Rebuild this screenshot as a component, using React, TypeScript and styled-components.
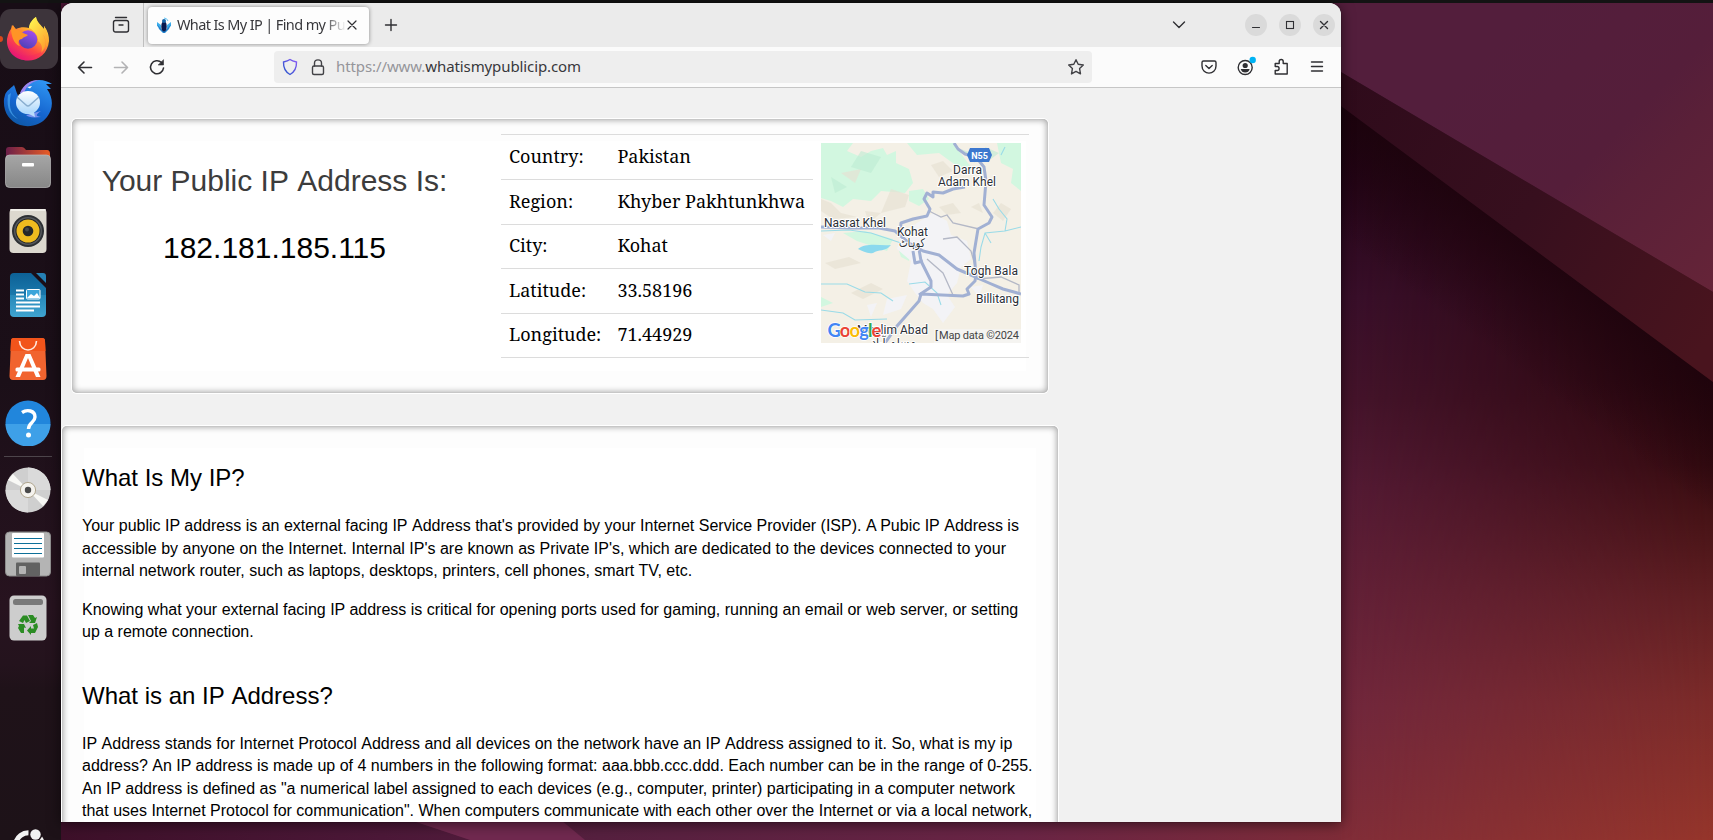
import React from 'react';
import styled, { createGlobalStyle } from 'styled-components';

const Global = createGlobalStyle`
  * { box-sizing: border-box; }
  body { margin: 0; overflow: hidden; background: #2c0e22; font-family: "Liberation Sans", Arial, sans-serif; }
  svg { display: block; flex: none; }
`;

const Desktop = styled.div`
  position: relative;
  width: 1713px;
  height: 840px;
  overflow: hidden;
  display: flex;
  flex-direction: column;
`;
const Backdrop = styled.div`
  position: absolute;
  inset: 0;
`;
const TopBar = styled.div`
  position: relative;
  height: 3px;
  flex: none;
  background: #131313;
`;
const Workspace = styled.div`
  position: relative;
  display: flex;
  align-items: flex-start;
  height: 837px;
`;
const Dock = styled.nav`
  width: 61px;
  height: 837px;
  flex: none;
  padding-top: 4px;
  overflow: hidden;
  display: flex;
  flex-direction: column;
  background: linear-gradient(180deg, #180d16 0%, #1b0f18 45%, #27131f 72%, #24131d 79%, #1f1219 82%, #1d1218 100%);
`;
const DockItem = styled.div<{ $active?: boolean }>`
  position: relative;
  width: 58px;
  height: 60px;
  margin: 2px 0;
  flex: none;
  display: flex;
  align-items: center;
  justify-content: center;
  padding-right: 2px;
  border-radius: 11px;
  background: ${(p) => (p.$active ? '#3d343b' : 'transparent')};
`;
const RunningDot = styled.span`
  position: absolute;
  left: -3px;
  top: 27px;
  width: 6px;
  height: 6px;
  border-radius: 50%;
  background: #d8481c;
`;
const DockRule = styled.div`
  width: 48px;
  height: 1px;
  margin: 1px 0 1px 4px;
  flex: none;
  background: #4d454b;
`;
const LauncherSlot = styled.div`
  padding: 179px 0 0 13px;
`;

const Window = styled.section`
  width: 1280px;
  height: 819px;
  flex: none;
  display: flex;
  flex-direction: column;
  overflow: hidden;
  border-radius: 12px 12px 0 0;
  background: #f1f1f1;
  box-shadow: 0 2px 14px rgba(0, 0, 0, 0.55), 0 0 1px #000;
`;
const TitleBar = styled.header`
  height: 44px;
  flex: none;
  display: flex;
  align-items: center;
  background: #ebebeb;
`;
const RecentSlot = styled.div`
  width: 83px;
  height: 44px;
  display: flex;
  align-items: center;
  padding-left: 51px;
  border-right: 1px solid #bfbfbf;
`;
const Tab = styled.div`
  width: 221px;
  height: 37px;
  margin: 0 0 0 4px;
  padding: 0 9px 0 9px;
  display: flex;
  align-items: center;
  border-radius: 4px;
  background: #fdfdfd;
  box-shadow: 0 0 4px rgba(0, 0, 0, 0.42);
`;
const TabTitle = styled.span`
  width: 169px;
  margin: -2px 0 0 6px;
  overflow: hidden;
  white-space: nowrap;
  font: 14.5px/20px "Noto Sans", sans-serif;
  letter-spacing: -0.62px;
  color: #38383c;
  mask-image: linear-gradient(90deg, #000 87%, transparent 100%);
`;
const NewTab = styled.div`
  margin-left: 15px;
`;
const WindowButtons = styled.div`
  margin-left: auto;
  padding-right: 6px;
  display: flex;
  align-items: center;
  gap: 12px;
`;
const TabsMenu = styled.div`
  margin-right: 47px;
`;
const RoundButton = styled.span`
  width: 22px;
  height: 22px;
  border-radius: 50%;
  background: #dadada;
  display: flex;
  align-items: center;
  justify-content: center;
`;
const Toolbar = styled.div`
  height: 41px;
  flex: none;
  display: flex;
  align-items: center;
  padding: 0 15px 0 15px;
  border-bottom: 1px solid #c6c6c6;
  background: #fbfbfb;
`;
const NavButtons = styled.div`
  display: flex;
  gap: 18px;
`;
const AddressBar = styled.div`
  width: 818px;
  height: 32px;
  margin-left: 108px;
  padding: 0 7px 0 7px;
  display: flex;
  align-items: center;
  border-radius: 4px;
  background: #eeeeee;
`;
const IdentityIcons = styled.div`
  display: flex;
  gap: 10px;
`;
const Url = styled.span`
  flex: 1;
  margin: -2px 0 0 9px;
  font: 15px/20px "Noto Sans", sans-serif;
  letter-spacing: -0.1px;
  color: #38383c;
  span { color: #95959a; }
`;
const ToolButtons = styled.div`
  margin-left: auto;
  display: flex;
  gap: 18px;
`;

const Page = styled.main`
  flex: 1;
  min-height: 0;
  overflow: hidden;
`;
const panel = `
  border-radius: 5px;
  background: #fff;
  box-shadow: 0 0 0 1px #fff, inset 0 0 6px 1px rgba(0, 0, 0, 0.36), inset 0 0 1px rgba(0, 0, 0, 0.2), inset 0 0 0 22px #fdfdfd;
`;
const IpPanel = styled.section`
  ${panel}
  width: 976px;
  height: 274px;
  margin: 31px 0 0 11px;
  padding: 15px 18px 0 23px;
  display: flex;
`;
const IpSummary = styled.div`
  width: 406px;
  padding-right: 47px;
  text-align: center;
  white-space: nowrap;
`;
const IpHeading = styled.h1`
  margin: 29px 0 0;
  font-size: 30px;
  line-height: 36px;
  font-weight: 400;
  color: #3c3c3c;
`;
const IpValue = styled.div`
  margin-top: 31px;
  font-size: 30px;
  line-height: 36px;
  color: #000;
`;
const Details = styled.div`
  display: flex;
  width: 528px;
  height: 224px;
  border-top: 1px solid #dcdcdc;
  border-bottom: 1px solid #dcdcdc;
`;
const DetailRows = styled.div`
  width: 312px;
`;
const DetailRow = styled.div<{ $height: number }>`
  display: flex;
  align-items: center;
  height: ${(p) => p.$height}px;
  padding: 0 0 ${(p) => (p.$height < 45 ? 4 : 2)}px 8px;
  border-bottom: 1px solid #dcdcdc;
  font: 18px/24px "Noto Serif", "DejaVu Serif Condensed", "DejaVu Serif", serif;
  white-space: nowrap;
  color: #000;
  &:last-child { border-bottom: 0; }
`;
const DetailLabel = styled.span`
  width: 108.4px;
`;
const MapFrame = styled.div`
  margin: 8px;
`;
const ArticlePanel = styled.article`
  ${panel}
  width: 996px;
  height: 440px;
  margin: 33px 0 0 1px;
  padding: 35px 0 0 20px;
`;
const ArticleHeading = styled.h2<{ $gap?: number }>`
  margin: ${(p) => p.$gap ?? 0}px 0 20.7px;
  font-size: 24px;
  line-height: 33.6px;
  font-weight: 400;
  color: #000;
`;
const Paragraph = styled.p`
  margin: 0 0 16px;
  font-size: 16px;
  line-height: 22.4px;
  white-space: nowrap;
  color: #000;
`;
const PlainSpace = styled.span`
  font-kerning: none;
`;

/* Keeps the space before a capital A at its full width, without kerning. */
const Words = ({ children }: { children: string }) => (
  <>
    {children.split(/ (?=A)/).map((part, i) => (
      <React.Fragment key={i}>
        {i > 0 && <PlainSpace> </PlainSpace>}
        {part}
      </React.Fragment>
    ))}
  </>
);

const Wallpaper = () => (
  <svg width="1713" height="840" viewBox="0 0 1713 840">
    <defs>
      <linearGradient id="upper" gradientUnits="userSpaceOnUse" x1="1480" y1="60" x2="1713" y2="290">
        <stop offset="0" stopColor="#531e3c" />
        <stop offset=".45" stopColor="#551e3a" />
        <stop offset=".6" stopColor="#5a2038" />
        <stop offset="1" stopColor="#652438" />
      </linearGradient>
      <linearGradient id="band" gradientUnits="userSpaceOnUse" x1="1341" y1="90" x2="1713" y2="330">
        <stop offset="0" stopColor="#2f0b1b" />
        <stop offset=".5" stopColor="#370f1e" />
        <stop offset="1" stopColor="#49141e" />
      </linearGradient>
      <linearGradient id="left" gradientUnits="userSpaceOnUse" x1="0" y1="106" x2="0" y2="840">
        <stop offset="0" stopColor="#19030f" />
        <stop offset=".1" stopColor="#26061a" />
        <stop offset=".26" stopColor="#390f2a" />
        <stop offset=".4" stopColor="#45142b" />
        <stop offset=".52" stopColor="#541a34" />
        <stop offset=".66" stopColor="#622037" />
        <stop offset=".82" stopColor="#71273c" />
        <stop offset="1" stopColor="#802d38" />
      </linearGradient>
      <linearGradient id="right" gradientUnits="userSpaceOnUse" x1="0" y1="382" x2="0" y2="840">
        <stop offset="0" stopColor="#29060c" />
        <stop offset=".18" stopColor="#360b10" />
        <stop offset=".3" stopColor="#471316" />
        <stop offset=".48" stopColor="#611f22" />
        <stop offset=".7" stopColor="#7c2b29" />
        <stop offset="1" stopColor="#95352b" />
      </linearGradient>
      <linearGradient id="fade" x1="0" x2="1" y1="0" y2="0">
        <stop offset="0" stopColor="#000" />
        <stop offset="1" stopColor="#fff" />
      </linearGradient>
      <mask id="rightMask" maskUnits="userSpaceOnUse" x="1341" y="0" width="372" height="840">
        <rect x="1341" width="372" height="840" fill="url(#fade)" />
      </mask>
      <linearGradient id="crease" gradientUnits="userSpaceOnUse" x1="1527" y1="244" x2="1463" y2="330">
        <stop offset="0" stopColor="#1c030c" stopOpacity=".75" />
        <stop offset="1" stopColor="#1c030c" stopOpacity="0" />
      </linearGradient>
      <linearGradient id="floor" x1="0" x2="1" y1="0" y2="0">
        <stop offset="0" stopColor="#3d1029" />
        <stop offset=".25" stopColor="#4c1838" />
        <stop offset=".42" stopColor="#56203f" />
        <stop offset=".75" stopColor="#6a2545" />
        <stop offset="1" stopColor="#7e2c38" />
      </linearGradient>
    </defs>
    <rect width="1713" height="840" fill="#4a1534" />
    <rect x="1300" width="413" height="840" fill="url(#left)" />
    <rect x="1341" width="372" height="840" fill="url(#right)" mask="url(#rightMask)" />
    <path d="M1341 106L1713 382V530L1341 254Z" fill="url(#crease)" />
    <path d="M1300 45V76L1341 106L1713 382V292L1341 72Z" fill="url(#band)" />
    <path d="M1300 0H1713V292L1341 72L1300 48Z" fill="url(#upper)" />
    <rect x="61" y="815" width="1280" height="25" fill="url(#floor)" />
    <path d="M395 815L470 840H585L555 815Z" fill="#70294f" />
  </svg>
);

const FirefoxIcon = () => (
  <svg width="44" height="44" viewBox="0 0 44 44">
    <defs>
      <linearGradient id="ffA" x1=".85" y1=".1" x2=".3" y2="1">
        <stop offset="0" stopColor="#fff04a" />
        <stop offset=".35" stopColor="#ffa52e" />
        <stop offset=".65" stopColor="#ff4a45" />
        <stop offset="1" stopColor="#e2127b" />
      </linearGradient>
      <linearGradient id="ffB" x1=".8" y1="0" x2=".3" y2="1">
        <stop offset="0" stopColor="#a84df0" />
        <stop offset="1" stopColor="#4a41b5" />
      </linearGradient>
      <linearGradient id="ffC" x1=".2" y1="0" x2=".8" y2="1">
        <stop offset="0" stopColor="#fff44f" />
        <stop offset="1" stopColor="#ff9a2b" />
      </linearGradient>
    </defs>
    <path d="M2 18C3 15 4 13 5 12L6 8L10 12C14 10 19 10 23 11C24 6 27 2 30 0C31 5 35 8 38 12L38 9C42 14 43 19 43 24C42 36 33 43.500 22 43.500C10 43.500 0 35 1 22Z" fill="url(#ffA)" />
    <path d="M23 11C23 6 27 2 30 0C30 6 36 9 38 13L38 9C45 20 42 31 35 36C37 31 36 27 32 24C33 20 28 13 23 11Z" fill="url(#ffC)" />
    <circle cx="22" cy="22.500" r="9.300" fill="url(#ffB)" />
    <path d="M5 13L7 8L10 13C13 12 15 15 17 16L22 18C20 20 17 20 16 22C13 22 11 25 14 29C9 28 6 22 5 13Z" fill="#ff9426" />
    <path d="M3 30C10 41 27 41 36 34C43 28 38 20 37 17C44 29 38 43 22 43.500C13 43.500 6 38 3 30Z" fill="#f31b69" opacity=".25" />
  </svg>
);

const ThunderbirdIcon = () => (
  <svg width="50" height="48" viewBox="0 0 50 48">
    <defs>
      <linearGradient id="tbA" x1=".8" y1="0" x2=".3" y2="1">
        <stop offset="0" stopColor="#2f95f2" />
        <stop offset=".6" stopColor="#1565cf" />
        <stop offset="1" stopColor="#0e58a6" />
      </linearGradient>
      <linearGradient id="tbB" x1="0" y1="0" x2="0" y2="1">
        <stop offset="0" stopColor="#fff" />
        <stop offset="1" stopColor="#a9d6fb" />
      </linearGradient>
    </defs>
    <path d="M2 16C3 12 8 9 11 6C13 10 13 14 16 18C19 8 26 1 36 1C41 1 46 3 49 5L43 5L48 10L44 10C51 20 50 30 44 38C38 46 27 49 17 46C6 42 0 33 1 20Z" fill="url(#tbA)" />
    <path d="M17 14C21 5 27 1 36 1C28 3 22 8 21 15Z" fill="#9c83ec" />
    <path d="M5 16C3 30 8 37 15 40C6 34 6 25 8 14Z" fill="#51b2fa" opacity=".6" />
    <path d="M23 36L38 32C34 35 31 37 38 38C29 39 25 38 23 36Z" fill="#7792ee" />
    <ellipse cx="25" cy="23.500" rx="12" ry="11.500" fill="url(#tbB)" />
    <path d="M14 18L23 26Q25 28 27 26L36 18" fill="none" stroke="#89aed0" strokeWidth="1.500" />
    <path d="M24 34L32 38L31 33Z" fill="#b9ddfb" />
    <path d="M24 8L29 7L27 9.500Z" fill="#fff" />
  </svg>
);

const FilesIcon = () => (
  <svg width="46" height="42" viewBox="0 0 46 42">
    <defs>
      <linearGradient id="fiA" x1="0" x2="1" y1="0" y2="0">
        <stop offset="0" stopColor="#6b1f49" />
        <stop offset="1" stopColor="#e95c25" />
      </linearGradient>
      <linearGradient id="fiB" x1="0" x2="0" y1="0" y2="1">
        <stop offset="0" stopColor="#a6a6a6" />
        <stop offset="1" stopColor="#878787" />
      </linearGradient>
    </defs>
    <path d="M1 4Q1 1 4 1H17Q19 1 21 4H42Q45 4 45 8V20H1Z" fill="url(#fiA)" />
    <rect x=".5" y="9" width="45" height="32.500" rx="4" fill="url(#fiB)" stroke="#bdbdbd" strokeWidth=".7" />
    <rect x="17" y="17" width="12" height="3.500" rx="1" fill="#fff" />
  </svg>
);

const MusicIcon = () => (
  <svg width="38" height="46" viewBox="0 0 38 46">
    <rect x=".5" y="1" width="37" height="44" rx="4" fill="#dcd8cf" />
    <rect x="1" y="1" width="36" height="2" rx="1" fill="#f0eee8" />
    <circle cx="19" cy="23" r="16" fill="#2d3034" />
    <circle cx="19" cy="23" r="14" fill="#55585c" />
    <circle cx="19" cy="23" r="12.500" fill="#212326" />
    <circle cx="19" cy="23" r="11.500" fill="#efbb1f" />
    <circle cx="19" cy="23" r="5.300" fill="#26282a" />
    <circle cx="18" cy="21.500" r="2" fill="#46494c" />
  </svg>
);

const WriterIcon = () => (
  <svg width="38" height="46" viewBox="0 0 38 46">
    <defs>
      <linearGradient id="wrA" x1="0" x2="0" y1="0" y2="1">
        <stop offset="0" stopColor="#0d6196" />
        <stop offset=".5" stopColor="#1a78ac" />
        <stop offset=".51" stopColor="#2688b9" />
        <stop offset="1" stopColor="#3fa4d0" />
      </linearGradient>
    </defs>
    <path d="M5 1H22L37 16V41Q37 45 33 45H5Q1 45 1 41V5Q1 1 5 1Z" fill="url(#wrA)" />
    <path d="M27 1H34Q37 1 37 4V11Z" fill="#2581b5" />
    <path d="M7 18.500H15M7 22.500H15M7 26.500H15M7 30.500H31M7 34.500H31M7 38.500H25" stroke="#fff" strokeWidth="2" />
    <rect x="17.500" y="17.500" width="13.500" height="9.500" rx="1" fill="#3ca5da" stroke="#fff" />
    <path d="M18 26L22 22L25 24L28 21L31 26Z" fill="#fff" />
  </svg>
);

const StoreIcon = () => (
  <svg width="38" height="44" viewBox="0 0 38 44">
    <path d="M5 1H33Q36 1 36 4L37.500 39Q37.500 43 34 43H4Q.5 43 .5 39L2 4Q2 1 5 1Z" fill="#f1642f" />
    <path d="M5 1H33Q36 1 36 4L36.500 14H1.500L2 4Q2 1 5 1Z" fill="#f2541b" />
    <path d="M10.500 4C11 16 27 16 27.500 4" fill="none" stroke="#ffe9df" strokeWidth="1.600" />
    <path d="M16.500 17H21.500L31.500 40H27L19 21L11 40H6.500Z" fill="#fff" />
    <rect x="6.500" y="30.500" width="25" height="4" rx="1.500" fill="#fff" />
  </svg>
);

const HelpIcon = () => (
  <svg width="46" height="46" viewBox="0 0 46 46">
    <circle cx="23" cy="23" r="22.500" fill="#2186dc" />
    <path d="M.5 24H45.500A22.500 22.500 0 0 1 .5 24Z" fill="#3ea0e8" />
    <path d="M17 12.500C22 9 30 10.500 30 17C30 22.500 23.500 22.500 23.500 29" fill="none" stroke="#fff" strokeWidth="3.400" />
    <circle cx="23.500" cy="35" r="2.500" fill="#fff" />
  </svg>
);

const DiscIcon = () => (
  <svg width="46" height="46" viewBox="0 0 46 46">
    <circle cx="23" cy="23" r="22.500" fill="#cfcfcf" />
    <path d="M23 23V.5A22.500 22.500 0 0 1 45.500 23Z" fill="#dadada" />
    <path d="M23 23V45.500A22.500 22.500 0 0 1 .5 23Z" fill="#dadada" />
    <path d="M23 23L3 13L8 7ZM23 23L43 33L38 39Z" fill="#f8f8f5" />
    <circle cx="23" cy="23" r="7.600" fill="#f5f3ee" stroke="#b1a78f" />
    <circle cx="23" cy="23" r="3.200" fill="#4a4a4a" />
  </svg>
);

const FloppyIcon = () => (
  <svg width="46" height="46" viewBox="0 0 46 46">
    <rect x=".5" y="1" width="45" height="44" rx="4" fill="#b4b4b4" stroke="#8c8c8c" />
    <rect x="7" y="2" width="32" height="24.500" rx="1" fill="#fff" />
    <path d="M9 7.500H37M9 12.500H37M9 17.500H37M9 22.500H37" stroke="#0e7099" />
    <rect x="11" y="31.500" width="24" height="13.500" rx="1" fill="#626262" />
    <rect x="14" y="35" width="7" height="8" rx="1" fill="#b4b4b4" />
  </svg>
);

const TrashIcon = () => (
  <svg width="38" height="46" viewBox="0 0 38 46">
    <rect x=".5" y=".5" width="37" height="45" rx="4.500" fill="#cdcdcd" />
    <rect x="4" y="4" width="30" height="6" rx="2.500" fill="#797979" />
    <g fill="#2b8c23">
      <path d="M14 20.500H18L21 26L17 28L15.500 25L14 28L10 26Z" />
      <path d="M19 20H24L26 23L28 22L26 28H20L22 26Z" />
      <path d="M24 30L28 28L29 32L26 38H22V40L18 35.500L22 31V33.500H25Z" />
      <path d="M9 29H15L17 33L15 32.500V38H12L9 33L10 31Z" />
    </g>
  </svg>
);

const UbuntuMark = () => (
  <svg width="32" height="32" viewBox="0 0 32 32">
    <path d="M2.800 13.500A13.500 13.500 0 0 1 15.500 3.800M27 9A13.500 13.500 0 0 1 29.500 17" fill="none" stroke="#f2f2f2" strokeWidth="5" />
    <circle cx="22.500" cy="5.500" r="6.700" fill="#1d1218" />
    <circle cx="22.500" cy="5.500" r="5.200" fill="#f2f2f2" />
  </svg>
);

const glyph = { fill: 'none', stroke: '#2f2f33', strokeWidth: 1.4, strokeLinecap: 'round' as const, strokeLinejoin: 'round' as const };

const RecentIcon = () => (
  <svg width="18" height="18" viewBox="0 0 18 18" {...glyph}>
    <path d="M3.500 1.500H14.500" /><rect x="1.500" y="4.500" width="15" height="11.500" rx="2" /><path d="M7 9H11" />
  </svg>
);
const FaviconIcon = () => (
  <svg width="14" height="16" viewBox="0 0 14 16">
    <path d="M0 5L4 8V12L0 9ZM14 5L10 8V12L14 9Z" fill="#3eb0ed" />
    <path d="M0 7L6 14H8L14 7L12 12L8 16H6L2 12Z" fill="#2083cf" />
    <ellipse cx="7" cy="9.500" rx="2.700" ry="5" fill="#07194f" />
    <circle cx="7" cy="4" r="2" fill="#1765a8" />
    <path d="M7 1Q10 1 11 4" fill="none" stroke="#63c6f5" />
  </svg>
);
const BackIcon = ({ dim }: { dim?: boolean }) => (
  <svg width="18" height="18" viewBox="0 0 18 18" {...glyph} stroke={dim ? '#b2b2b4' : '#2f2f33'} strokeWidth={1.6}>
    {dim ? <path d="M2.500 9.500H15.500M10 4L15.500 9.500L10 15" /> : <path d="M15.500 9.500H2.500M8 4L2.500 9.500L8 15" />}
  </svg>
);
const ReloadIcon = () => (
  <svg width="18" height="18" viewBox="0 0 18 18" {...glyph} strokeWidth={1.6}>
    <path d="M15.500 10A6.500 6.500 0 1 1 13.500 4.500" /><path d="M15.500 2V7H10.500Z" fill="#2f2f33" strokeWidth=".6" />
  </svg>
);
const ShieldIcon = () => (
  <svg width="18" height="18" viewBox="0 0 18 18">
    <defs>
      <linearGradient id="shield" x1="1" x2="0" y1="0" y2="1">
        <stop offset="0" stopColor="#8b5cf5" /><stop offset="1" stopColor="#2154c9" />
      </linearGradient>
    </defs>
    <path d="M9 1.500C11 3 13 3.500 15.500 4C15.700 10 13.500 14 9 16.500C4.500 14 2.300 10 2.500 4C5 3.500 7 3 9 1.500Z" fill="none" stroke="url(#shield)" strokeWidth="1.400" />
  </svg>
);
const LockIcon = () => (
  <svg width="18" height="18" viewBox="0 0 18 18" {...glyph} stroke="#424246">
    <rect x="3.500" y="8" width="11" height="8.500" rx="1.500" /><path d="M5.500 8V5C5.500 .8 12.500 .8 12.500 5V8" />
  </svg>
);
const StarIcon = () => (
  <svg width="18" height="18" viewBox="0 0 18 18" {...glyph} stroke="#424246">
    <path d="M9 1.700L11.200 6.300L16.300 7L12.600 10.600L13.500 15.900L9 13.400L4.500 15.900L5.400 10.600L1.700 7L6.800 6.300Z" />
  </svg>
);
const PocketIcon = () => (
  <svg width="18" height="18" viewBox="0 0 18 18" {...glyph}>
    <path d="M3.500 3H14.500Q16 3 16 4.500V8C16 17.500 2 17.500 2 8V4.500Q2 3 3.500 3ZM5.800 7.500L9 10.500L12.200 7.500" />
  </svg>
);
const AccountIcon = () => (
  <svg width="18" height="18" viewBox="-0.700 0 18 18" overflow="visible">
    <circle cx="8.500" cy="9.500" r="7" fill="none" stroke="#2f2f33" strokeWidth="1.400" />
    <circle cx="8.500" cy="7.500" r="2.600" fill="#2f2f33" />
    <path d="M4 11H13Q12 14.500 8.500 14.500T4 11Z" fill="#2f2f33" />
    <circle cx="16" cy="2" r="3.200" fill="#00b3f4" />
  </svg>
);
const ExtensionIcon = () => (
  <svg width="18" height="18" viewBox="-0.700 0 18 18" {...glyph}>
    <path d="M2.500 8V5.500H6.500V3.500C6.500 .9 10.500 .9 10.500 3.500V5.500H14.500V16H2.500V12.500H4.500C7 12.500 7 8.500 4.500 8.500H2.500" />
  </svg>
);
const MenuIcon = () => (
  <svg width="18" height="18" viewBox="0 0 18 18" {...glyph}><path d="M3.500 4H14.500M3.500 8.500H14.500M3.500 13H14.500" /></svg>
);

const label = {
  fontFamily: 'Roboto, sans-serif', fontSize: 12, fill: '#2b2f36',
  stroke: '#fff', strokeWidth: 2, paintOrder: 'stroke' as const, strokeLinejoin: 'round' as const,
};

const KohatMap = () => (
  <svg width="200" height="200" viewBox="0 0 200 200">
    <rect width="200" height="200" fill="#f4f0e6" />
    <path d="M0 0H32L26 8L40 14L50 8L62 5L66 12L75 8V20L88 26L92 40L84 50L60 48L50 58L32 56L22 64L10 58L0 55ZM86 0H132L150 24L140 26L118 10L96 12ZM176 0H200V48L190 40L192 26L180 20ZM88 48L102 46L108 56L98 63L88 58ZM22 90L44 88L72 96L66 108L36 98ZM78 108L90 106L88 118L80 114ZM0 154L12 160L0 164Z" fill="#d2f7e0" />
    <path d="M0 56L10 60L20 70L36 74L12 76L0 68ZM70 46L88 52L84 64L60 70ZM110 22L122 18L132 28L118 34ZM4 120L28 114L40 120L14 126ZM30 150L50 140L62 146L42 156ZM118 64L132 60L140 70L126 72ZM180 60L190 66L182 78L172 70ZM20 30L40 26L34 40ZM44 68L60 70L48 80ZM150 64L158 60L162 70Z" fill="#e6e1d3" opacity=".65" />
    <path d="M40 8L60 14L50 30L30 24ZM10 34L26 44L14 50ZM140 6L150 10L154 20ZM164 4L178 10L170 16Z" fill="#bdebd2" opacity=".6" />
    <path d="M112 70L126 78L130 92L146 98L150 116L140 124L136 140L126 152L134 164L122 180L112 166L102 160L94 150L86 138L90 118L76 106L80 90L96 80ZM66 156L86 152L80 166L62 172ZM46 162L56 160L50 174ZM150 144L162 142L158 154ZM2 92L14 90L10 98Z" fill="#f3f3f6" />
    <path d="M37 106C46 99 58 103 70 102C64 109 58 106 52 110C46 111 42 108 37 106Z" fill="#8bd9ee" />
    <g fill="none" stroke="#9adbe8" strokeWidth="1.100">
      <path d="M0 88L28 87L50 90L80 100M0 141L26 141L44 149L60 150L72 158M0 167L22 170L34 177L66 176M88 141L104 139L116 150L120 162M200 84L184 88L164 90L160 104L158 118M172 56L178 66L186 76L184 88M180 12L184 4M164 90L170 100" />
    </g>
    <g fill="none" stroke="#b4b8c6" strokeWidth="1.300">
      <path d="M108 68L120 74L126 72L132 80L158 86M122 96L136 94L150 108L156 130M106 116L122 130L132 152M156 136L180 134L198 142V150" />
    </g>
    <g fill="none" stroke="#a1b0d3" strokeWidth="3" strokeLinejoin="round">
      <path d="M0 84L30 85L58 85L74 88L88 100L102 108L118 112L136 126L150 132L168 140L182 146L200 151" />
      <path d="M79 90L80 80L92 76L106 73L109 66L103 56L106 50L112 54L112 49L122 50L132 46L144 44" />
      <path d="M133 0L137 6L144 11L155 14L163 24L165 38L163 62L171 74L168 80L157 86L153 110L155 132L154 138L146 146L148 151L142 153L100 151L98 158L76 183L64 200" />
      <path d="M98 106L100 118L110 138V144L98 152M92 108L94 120L102 118" />
    </g>
    <path d="M149 5H168L171 12L168 19H149L146 12Z" fill="#3d78cf" />
    <text x="158.500" y="15.500" textAnchor="middle" fontFamily="Roboto, sans-serif" fontSize="9" fontWeight="700" fill="#fff">N55</text>
    <g {...label}>
      <text x="132" y="31" textLength="29">Darra</text>
      <text x="117" y="43" textLength="58">Adam Khel</text>
      <text x="3" y="83.500" textLength="62">Nasrat Khel</text>
      <text x="76" y="92.500" textLength="31">Kohat</text>
      <text x="78" y="104" fontSize="12" textLength="26" lengthAdjust="spacingAndGlyphs" style={{ fontFamily: '"DejaVu Sans", sans-serif' }}>كوہاٹ</text>
      <text x="143" y="131.500" textLength="54">Togh Bala</text>
      <text x="155" y="159.500" textLength="43">Billitang</text>
      <text x="36" y="190.500" textLength="71">Muslim Abad</text>
      <text x="50" y="203" fontSize="11" textLength="45" lengthAdjust="spacingAndGlyphs" style={{ fontFamily: '"DejaVu Sans", sans-serif' }}>مسلم آباد</text>
    </g>
    <rect x="113" y="186" width="87" height="14" fill="#f5f5f5" opacity=".7" />
    <text x="114" y="196" fontFamily="Roboto, sans-serif" fontSize="11" fill="#444">[</text>
    <text x="118" y="196" fontFamily="Roboto, sans-serif" fontSize="11" fill="#444" textLength="80">Map data ©2024</text>
    <text x="6.500" y="193.500" fontFamily="Lato, sans-serif" fontSize="18.500" fontWeight="700" textLength="54" stroke="#fff" strokeWidth="1.500" paintOrder="stroke">
      <tspan fill="#4285f4">G</tspan><tspan fill="#ea4335">o</tspan><tspan fill="#fbbc05">o</tspan><tspan fill="#4285f4">g</tspan><tspan fill="#34a853">l</tspan><tspan fill="#ea4335">e</tspan>
    </text>
  </svg>
);

const details: [string, string, number][] = [
  ['Country:', 'Pakistan', 45],
  ['Region:', 'Khyber Pakhtunkhwa', 45],
  ['City:', 'Kohat', 44],
  ['Latitude:', '33.58196', 45],
  ['Longitude:', '71.44929', 43],
];

const upperApps = [ThunderbirdIcon, FilesIcon, MusicIcon, WriterIcon, StoreIcon, HelpIcon];
const lowerApps = [DiscIcon, FloppyIcon, TrashIcon];

export default function App() {
  return (
    <Desktop>
      <Global />
      <Backdrop><Wallpaper /></Backdrop>
      <TopBar />
      <Workspace>
        <Dock>
          <DockItem $active><RunningDot /><FirefoxIcon /></DockItem>
          {upperApps.map((Icon, i) => <DockItem key={i}><Icon /></DockItem>)}
          <DockRule />
          {lowerApps.map((Icon, i) => <DockItem key={i}><Icon /></DockItem>)}
          <LauncherSlot><UbuntuMark /></LauncherSlot>
        </Dock>
        <Window>
          <TitleBar>
            <RecentSlot><RecentIcon /></RecentSlot>
            <Tab>
              <FaviconIcon />
              <TabTitle>What Is My IP | Find my Public IP</TabTitle>
              <svg width="12" height="12" viewBox="0 0 12 12" {...glyph} strokeWidth={1.2}><path d="M2 2L10 10M10 2L2 10" /></svg>
            </Tab>
            <NewTab>
              <svg width="14" height="14" viewBox="0 0 14 14" {...glyph}><path d="M7 1.500V12.500M1.500 7H12.500" /></svg>
            </NewTab>
            <WindowButtons>
              <TabsMenu>
                <svg width="14" height="14" viewBox="0 0 14 14" {...glyph}><path d="M1.500 4L7 9.500L12.500 4" /></svg>
              </TabsMenu>
              <RoundButton><svg width="10" height="10" viewBox="0 0 10 10" {...glyph} strokeWidth={1.1}><path d="M1.500 7.500H8.500" /></svg></RoundButton>
              <RoundButton><svg width="10" height="10" viewBox="0 0 10 10" {...glyph} strokeWidth={1.1} strokeLinejoin="miter"><rect x="1.500" y="1.500" width="7" height="7" /></svg></RoundButton>
              <RoundButton><svg width="10" height="10" viewBox="0 0 10 10" {...glyph}><path d="M1.500 1.500L8.500 8.500M8.500 1.500L1.500 8.500" /></svg></RoundButton>
            </WindowButtons>
          </TitleBar>
          <Toolbar>
            <NavButtons><BackIcon /><BackIcon dim /><ReloadIcon /></NavButtons>
            <AddressBar>
              <IdentityIcons><ShieldIcon /><LockIcon /></IdentityIcons>
              <Url><span>https://www.</span>whatismypublicip.com</Url>
              <StarIcon />
            </AddressBar>
            <ToolButtons><PocketIcon /><AccountIcon /><ExtensionIcon /><MenuIcon /></ToolButtons>
          </Toolbar>
          <Page>
            <IpPanel>
              <IpSummary>
                <IpHeading><Words>Your Public IP Address Is:</Words></IpHeading>
                <IpValue>182.181.185.115</IpValue>
              </IpSummary>
              <Details>
                <DetailRows>
                  {details.map(([name, value, height]) => (
                    <DetailRow key={name} $height={height}><DetailLabel>{name}</DetailLabel>{value}</DetailRow>
                  ))}
                </DetailRows>
                <MapFrame><KohatMap /></MapFrame>
              </Details>
            </IpPanel>
            <ArticlePanel>
              <ArticleHeading>What Is My IP?</ArticleHeading>
              <Paragraph>
                <Words>Your public IP address is an external facing IP Address that's provided by your Internet Service Provider (ISP). A Pubic IP Address is</Words><br />
                accessible by anyone on the Internet. Internal IP's are known as Private IP's, which are dedicated to the devices connected to your<br />
                internal network router, such as laptops, desktops, printers, cell phones, smart TV, etc.
              </Paragraph>
              <Paragraph>
                Knowing what your external facing IP address is critical for opening ports used for gaming, running an email or web server, or setting<br />
                up a remote connection.
              </Paragraph>
              <ArticleHeading $gap={35.2}><Words>What is an IP Address?</Words></ArticleHeading>
              <Paragraph>
                <Words>IP Address stands for Internet Protocol Address and all devices on the network have an IP Address assigned to it. So, what is my ip</Words><br />
                <Words>address? An IP address is made up of 4 numbers in the following format: aaa.bbb.ccc.ddd. Each number can be in the range of 0-255.</Words><br />
                An IP address is defined as "a numerical label assigned to each devices (e.g., computer, printer) participating in a computer network<br />
                that uses Internet Protocol for communication". When computers communicate with each other over the Internet or via a local network,
              </Paragraph>
            </ArticlePanel>
          </Page>
        </Window>
      </Workspace>
    </Desktop>
  );
}
